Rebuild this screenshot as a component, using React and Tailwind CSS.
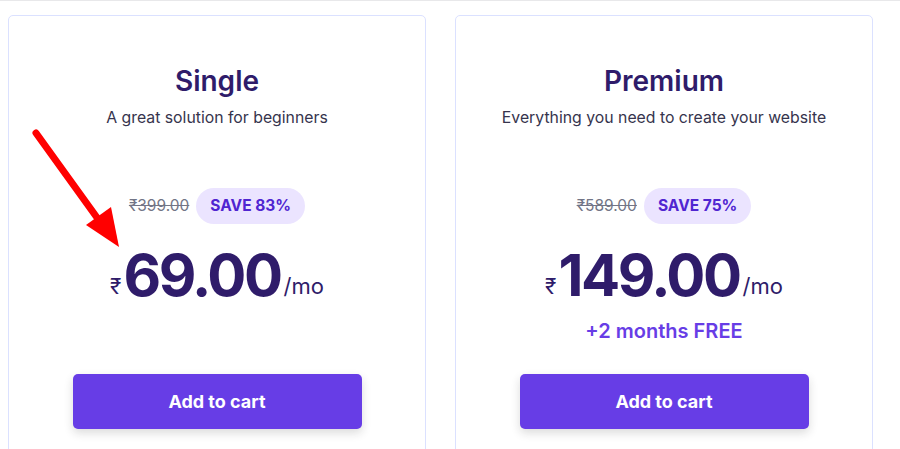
/**
 * Pricing cards: Single + Premium plans, with red annotation arrow.
 */
const plans = [
  {
    name: 'Single',
    tagline: 'A great solution for beginners',
    oldPrice: '₹399.00',
    save: 'SAVE 83%',
    price: '69.00',
    extra: null,
  },
  {
    name: 'Premium',
    tagline: 'Everything you need to create your website',
    oldPrice: '₹589.00',
    save: 'SAVE 75%',
    price: '149.00',
    extra: '+2 months FREE',
  },
];

function PlanCard({ plan }) {
  return (
    <div className="w-[418px] shrink-0 h-[460px] bg-white border border-[#dbe1ff] rounded-[5px] flex flex-col items-center pt-[47px]">
      <h2 className="text-[28px] leading-[36px] font-semibold text-[#2f1c6a]">{plan.name}</h2>
      <p className="mt-[7px] text-[15.8px] leading-[24px] text-[#36344d]">{plan.tagline}</p>

      <div className="mt-[58px] flex items-center gap-[7px]">
        <span className="text-[15.5px] text-[#727586] line-through">{plan.oldPrice}</span>
        <span className="h-[36px] px-[14px] rounded-full bg-[#ebe4ff] text-[#5025d1] text-[15.5px] font-bold flex items-center">
          {plan.save}
        </span>
      </div>

      <div className="mt-[21px] flex items-end text-[#2f1c6a] h-[60px]">
        <span className="text-[21px] leading-none mb-[8px] mr-[2px]">₹</span>
        <span className="text-[58px] leading-[60px] font-bold tracking-[-2.5px]">{plan.price}</span>
        <span className="text-[22px] leading-none mb-[8px] ml-[3px]">/mo</span>
      </div>

      <div className="mt-[12px] h-[28px] text-[20px] leading-[28px] font-semibold text-[#673de6]">
        {plan.extra}
      </div>

      <button className="mt-[29px] w-[289px] h-[55px] rounded-[5px] bg-[#673de6] text-white text-[18px] font-bold shadow-[0_4px_10px_rgba(29,30,32,0.16)]">
        Add to cart
      </button>
    </div>
  );
}

export default function App() {
  return (
    <div
      className="relative w-[900px] h-[449px] overflow-hidden bg-white border-t border-[#e8e8ea]"
      style={{ fontFamily: 'Inter, "Noto Sans", sans-serif' }}
    >
      <div className="flex gap-[29px] pl-[8px] pt-[14px]">
        {plans.map((p) => (
          <PlanCard key={p.name} plan={p} />
        ))}
        <div className="w-[418px] shrink-0 h-[460px] bg-white border border-[#dbe1ff] rounded-[5px]" />
      </div>

      {/* red annotation arrow */}
      <svg className="absolute left-0 top-0" width="140" height="260" viewBox="0 0 140 260">
        <line x1="36" y1="132" x2="98" y2="218" stroke="#ff0000" strokeWidth="7" strokeLinecap="round" />
        <polygon points="86,224 111,206 119,246" fill="#ff0000" />
      </svg>
    </div>
  );
}
